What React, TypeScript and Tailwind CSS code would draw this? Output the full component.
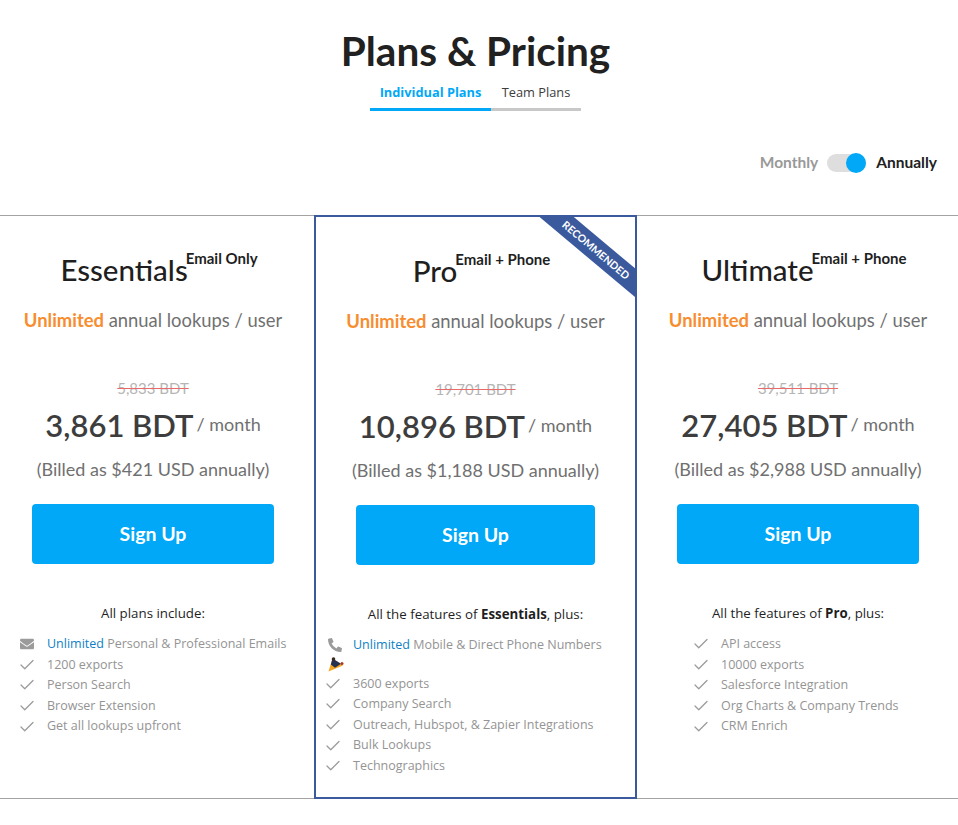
import React from 'react';
import { Check } from 'lucide-react';
import { FaEnvelope, FaPhoneAlt } from 'react-icons/fa';

const heading = "font-['Lato',sans-serif]";

const PartyIcon = () => (
  <svg width="16" height="15" viewBox="0 0 16 15">
    <path d="M0.5 14.5 L4.5 1.5 L15 8.5 Z" fill="#f5a623" />
    <path d="M2.8 7.5 L4.5 1.5 L13 6.8 L7 10.8 Z" fill="#26324f" />
    <circle cx="5.5" cy="2" r="1.8" fill="#3b2a20" />
    <circle cx="14" cy="6.5" r="1.5" fill="#a83a24" />
  </svg>
);

interface Feature {
  label: string;
  lead?: string;
  icon?: 'mail' | 'phone';
}

const FeatureRow = ({ feature }: { feature: Feature }) => (
  <li className="h-[20.6px] flex items-center">
    <span className="w-[29px] shrink-0 flex items-center text-[#9b9b9b]">
      {feature.icon === 'mail' && <FaEnvelope size={14} className="ml-[2px]" />}
      {feature.icon === 'phone' && <FaPhoneAlt size={14} className="ml-[4px]" />}
      {!feature.icon && <Check size={18} strokeWidth={1.7} />}
    </span>
    <span>
      {feature.lead && <span className="text-[#0f7fc6]">{feature.lead} </span>}
      {feature.label}
    </span>
  </li>
);

const PlanCard = ({
  name,
  tag,
  oldPrice,
  price,
  billed,
  intro,
  features,
  className,
  listClass,
  children,
}: {
  name: string;
  tag: string;
  oldPrice: string;
  price: string;
  billed: string;
  intro: React.ReactNode;
  features: React.ReactNode;
  className: string;
  listClass: string;
  children?: React.ReactNode;
}) => (
  <div className={`relative flex flex-col ${className}`}>
    {children}
    <div className={`${heading} h-[42px] mt-[33px] ml-[12px] flex justify-center whitespace-nowrap text-[#1f1f1f]`}>
      <span className="text-[29.5px] leading-[42px] font-medium">{name}</span>
      <span className="text-[15px] leading-[20px] font-bold -ml-[2px] -mt-[1px]">{tag}</span>
    </div>
    <p className={`${heading} mt-[16px] -mx-[30px] text-center text-[18.4px] leading-[26px] whitespace-nowrap text-[#707070]`}>
      <span className="font-bold text-[#f78d2e]">Unlimited</span> annual lookups / user
    </p>
    <p className={`${heading} mt-[43px] text-center text-[15px] leading-[24px] text-[#b5b5b5] line-through decoration-[#e86a6a]`}>
      {oldPrice}
    </p>
    <p className={`${heading} mt-[2px] -mx-[30px] flex justify-center items-center whitespace-nowrap text-[#3d3d3d] h-[46px]`}>
      <span className="text-[31px] leading-[44px] font-semibold">{price}</span>
      <span className="text-[18px] text-[#707070] ml-[3px] -mt-[2px]">/ month</span>
    </p>
    <p className={`${heading} mt-[7px] -mx-[30px] text-center text-[18px] leading-[28px] whitespace-nowrap text-[#707070]`}>
      {billed}
    </p>
    <button className={`${heading} mt-[21px] h-[60px] w-full rounded-[4px] bg-[#00a8f7] text-white text-[19.5px] font-bold`}>
      Sign Up
    </button>
    <p className="mt-[39px] -mx-[30px] text-center text-[13.3px] leading-[20px] text-[#1f1f1f] font-['Open_Sans',sans-serif]">
      {intro}
    </p>
    <ul className={`mt-[11px] text-[12.5px] text-[#949494] whitespace-nowrap font-['Open_Sans',sans-serif] ${listClass}`}>
      {features}
    </ul>
  </div>
);

export default function App() {
  return (
    <div className="w-[958px] h-[825px] bg-white overflow-hidden">
      {/* Title and tabs */}
      <div className="pt-[26px] pr-[7px] flex flex-col items-center">
        <h1 className={`${heading} text-[40.5px] leading-[50px] font-bold text-[#212121]`}>Plans &amp; Pricing</h1>
        <div className="mt-[3px] flex text-[12.8px] font-['Open_Sans',sans-serif]">
          <div className="w-[121px] h-[32px] pb-[2px] flex items-center justify-center font-bold text-[#00a8f7] border-b-[3px] border-[#00a8f7]">
            Individual Plans
          </div>
          <div className="w-[90px] h-[32px] pb-[2px] flex items-center justify-center text-[#3d3d3d] border-b-[3px] border-[#c8c8c8]">
            Team Plans
          </div>
        </div>
      </div>

      {/* Billing toggle */}
      <div className={`${heading} mt-[40px] h-[24px] pr-[21px] flex items-center justify-end text-[15.5px] font-bold`}>
        <span className="text-[#999999]">Monthly</span>
        <span className="relative ml-[9px] w-[39px] h-[18px] rounded-full bg-[#dedede]">
          <span className="absolute right-0 -top-[1px] w-[20px] h-[20px] rounded-full bg-[#00a8f7]" />
        </span>
        <span className="ml-[10px] text-[#212121]">Annually</span>
      </div>

      {/* Plans */}
      <div className="mt-[40px] h-[584px] flex border-y border-[#a3a3a3]">
        <PlanCard
          name="Essentials"
          tag="Email Only"
          oldPrice="5,833 BDT"
          price="3,861 BDT"
          billed="(Billed as $421 USD annually)"
          intro="All plans include:"
          className="w-[314px] pl-[32px] pr-[40px]"
          listClass="-ml-[14px]"
          features={
            <>
              <FeatureRow feature={{ lead: 'Unlimited', label: 'Personal & Professional Emails', icon: 'mail' }} />
              <FeatureRow feature={{ label: '1200 exports' }} />
              <FeatureRow feature={{ label: 'Person Search' }} />
              <FeatureRow feature={{ label: 'Browser Extension' }} />
              <FeatureRow feature={{ label: 'Get all lookups upfront' }} />
            </>
          }
        />
        <PlanCard
          name="Pro"
          tag="Email + Phone"
          oldPrice="19,701 BDT"
          price="10,896 BDT"
          billed="(Billed as $1,188 USD annually)"
          intro={
            <>
              All the features of <b>Essentials</b>, plus:
            </>
          }
          className="w-[323px] -mt-[1px] -mb-[1px] border-2 border-[#3b5a9d] px-[40px] overflow-hidden"
          listClass="-ml-[32px]"
          features={
            <>
              <FeatureRow feature={{ lead: 'Unlimited', label: 'Mobile & Direct Phone Numbers', icon: 'phone' }} />
              <li className="h-[18px] pl-[4px] flex items-center">
                <PartyIcon />
              </li>
              <FeatureRow feature={{ label: '3600 exports' }} />
              <FeatureRow feature={{ label: 'Company Search' }} />
              <FeatureRow feature={{ label: 'Outreach, Hubspot, & Zapier Integrations' }} />
              <FeatureRow feature={{ label: 'Bulk Lookups' }} />
              <FeatureRow feature={{ label: 'Technographics' }} />
            </>
          }
        >
          <div className={`${heading} absolute top-[22px] left-[205px] w-[150px] h-[22px] rotate-[40deg] bg-[#3b5a9d] text-white text-[10.5px] leading-[22px] font-bold text-center`}>
            RECOMMENDED
          </div>
        </PlanCard>
        <PlanCard
          name="Ultimate"
          tag="Email + Phone"
          oldPrice="39,511 BDT"
          price="27,405 BDT"
          billed="(Billed as $2,988 USD annually)"
          intro={
            <>
              All the features of <b>Pro</b>, plus:
            </>
          }
          className="w-[321px] pl-[40px] pr-[39px]"
          listClass="ml-[15px]"
          features={
            <>
              <FeatureRow feature={{ label: 'API access' }} />
              <FeatureRow feature={{ label: '10000 exports' }} />
              <FeatureRow feature={{ label: 'Salesforce Integration' }} />
              <FeatureRow feature={{ label: 'Org Charts & Company Trends' }} />
              <FeatureRow feature={{ label: 'CRM Enrich' }} />
            </>
          }
        />
      </div>
    </div>
  );
}
